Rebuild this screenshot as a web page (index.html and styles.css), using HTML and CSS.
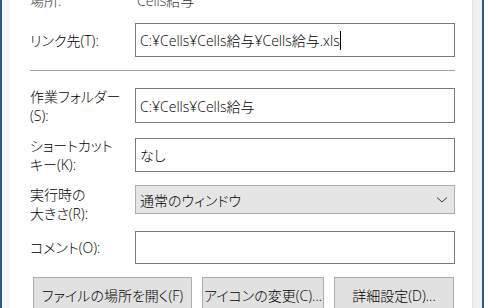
FILE: index.html
```html
<!DOCTYPE html>
<html lang="ja">
<head>
    <meta charset="UTF-8">
    <title>ショートカットのプロパティ</title>
    <link rel="stylesheet" href="styles.css">
</head>
<body>

<div class="frame">
    <div class="edge-left"></div>

    <div class="panel">
        <div class="row row-top">
            <div class="label">場所:</div>
            <div class="value">Cells給与</div>
        </div>

        <div class="row row-link">
            <label class="label">リンク先(T):</label>
            <div class="field">C:¥Cells¥Cells給与¥Cells給与.xls<span class="caret"></span></div>
        </div>

        <div class="sep"></div>

        <div class="row row-wd">
            <label class="label">作業フォルダー<br>(S):</label>
            <div class="field">C:¥Cells¥Cells給与</div>
        </div>

        <div class="row row-key">
            <label class="label">ショートカット<br>キー(K):</label>
            <div class="field">なし</div>
        </div>

        <div class="row row-run">
            <label class="label">実行時の<br>大きさ(R):</label>
            <div class="select">
                <span>通常のウィンドウ</span>
                <svg width="12" height="8" viewBox="0 0 12 8"><path d="M1 1.5 L6 6 L11 1.5" fill="none" stroke="#333" stroke-width="1"/></svg>
            </div>
        </div>

        <div class="row row-comment">
            <label class="label">コメント(O):</label>
            <div class="field"></div>
        </div>

        <div class="buttons">
            <button class="btn btn-open">ファイルの場所を開く(F)</button>
            <button class="btn btn-icon">アイコンの変更(C)...</button>
            <button class="btn btn-adv">詳細設定(D)...</button>
        </div>
    </div>

    <div class="edge-right"></div>
</div>

</body>
</html>
```

FILE: styles.css
```css
* {
    box-sizing: border-box;
}

body {
    margin: 0;
    font-family: "Open Sans", "Noto Sans CJK JP", sans-serif;
    font-size: 14px;
    font-weight: 300;
    font-feature-settings: "palt";
    color: #000;
    background: #fff;
}

.frame {
    display: flex;
    height: 308px;
    overflow: hidden;
}

.edge-left {
    width: 10px;
    border-left: 2px solid #2b5a8a;
    background: #f4f6f8;
}

.edge-right {
    width: 12px;
    border-right: 2px solid #2b5a8a;
    border-left: 1px solid #e3e3e3;
    background: #f0f0f0;
}

.panel {
    flex: 1;
    padding: 0 17px 0 20px;
}

.row {
    display: flex;
    align-items: center;
}

.label {
    width: 105px;
    flex-shrink: 0;
    line-height: 19px;
    white-space: nowrap;
}

.row-top {
    height: 20px;
    margin-top: -10px;
    color: #333;
}

.row-top .value {
    padding-left: 2px;
}

.field {
    flex: 1;
    height: 100%;
    border: 1px solid #7a7a7a;
    padding: 0 4px;
    display: flex;
    align-items: center;
    white-space: nowrap;
}

.caret {
    display: inline-block;
    width: 1px;
    height: 19px;
    background: #000;
}

.row-link {
    height: 34px;
    margin-top: 13px;
}

.sep {
    height: 1px;
    background: #a0a0a0;
    margin: 13px 0 17px;
}

.row-wd {
    height: 35px;
}

.row-key {
    height: 34px;
    margin-top: 15px;
}

.row-run {
    height: 29px;
    margin-top: 13px;
}

.row-run .label {
    position: relative;
    top: 4px;
}

.select {
    flex: 1;
    height: 100%;
    border: 1px solid #adadad;
    background: #e5e5e5;
    display: flex;
    align-items: center;
    justify-content: space-between;
    padding: 0 6px 0 4px;
}

.row-comment {
    height: 33px;
    margin-top: 17px;
}

.buttons {
    display: flex;
    gap: 10px;
    margin-top: 13px;
    padding-left: 3px;
}

.btn {
    height: 36px;
    font: inherit;
    color: #000;
    background: #e1e1e1;
    border: 1px solid #adadad;
    padding: 0;
    white-space: nowrap;
}

.btn-open {
    width: 159px;
}

.btn-icon {
    width: 122px;
}

.btn-adv {
    width: 120px;
}
```
